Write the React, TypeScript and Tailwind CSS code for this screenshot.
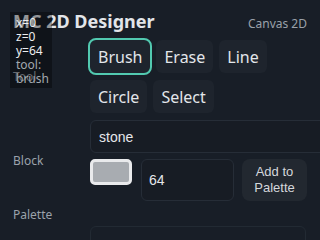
const TOOLS_ROW1 = ["Brush", "Erase", "Line"];
const TOOLS_ROW2 = ["Circle", "Select"];

function ToolButton({ label, active }: { label: string; active?: boolean }) {
  return (
    <button
      className={`h-[33px] rounded-[6px] bg-[#1e242d] px-[8px] text-[16px] text-[#e3e6ea] ${
        active ? "outline-2 outline-[#52c9b0]" : ""
      }`}
    >
      {label}
    </button>
  );
}

export default function App() {
  return (
    <div className="relative h-[240px] w-[320px] overflow-hidden bg-[#181e27] font-['Noto_Sans',sans-serif]">
      <header className="flex items-baseline justify-between pl-[13px] pr-[13px] pt-[9px]">
        <h1 className="text-[18px] font-bold leading-[24px] text-[#e2e5e9]">MC 2D Designer</h1>
        <span className="text-[12px] text-[#9aa1aa]">Canvas 2D</span>
      </header>

      <div className="mt-[7px] flex flex-col gap-[7px]">
        <div className="flex items-center">
          <span className="w-[90px] pl-[13px] text-[12px] text-[#9ba2ab]">Tool</span>
          <div className="flex flex-col gap-[7px]">
            <div className="flex gap-[6px]">
              {TOOLS_ROW1.map((t) => (
                <ToolButton key={t} label={t} active={t === "Brush"} />
              ))}
            </div>
            <div className="flex gap-[6px]">
              {TOOLS_ROW2.map((t) => (
                <ToolButton key={t} label={t} />
              ))}
            </div>
          </div>
        </div>

        <div className="flex items-center">
          <span className="w-[90px] shrink-0 pl-[13px] text-[12px] text-[#9ba2ab]">Block</span>
          <div className="flex flex-col gap-[6px]">
            <input
              readOnly
              value="stone"
              className="h-[33px] w-[250px] rounded-[6px] border border-[#262d37] bg-[#171c24] px-[8px] font-['Liberation_Sans',sans-serif] text-[14px] text-[#e5e7eb]"
            />
            <div className="flex items-start">
              <div className="h-[26px] w-[42px] rounded-[5px] border-[3px] border-[#e9eaec] bg-[#a8acb1]" />
              <input
                readOnly
                value="64"
                className="ml-[9px] h-[42px] w-[93px] rounded-[6px] border border-[#262d37] bg-[#171c24] px-[7px] font-['Liberation_Sans',sans-serif] text-[14px] text-[#e5e7eb]"
              />
              <button className="ml-[8px] h-[42px] w-[65px] rounded-[8px] bg-[#222830] font-['Liberation_Sans',sans-serif] text-[13px] leading-[16px] text-[#d4d7dc]">
                Add to Palette
              </button>
            </div>
          </div>
        </div>

        <div className="flex items-start">
          <span className="-mt-[2px] w-[90px] shrink-0 pl-[13px] text-[12px] text-[#9ba2ab]">Palette</span>
          <div className="mt-[18px] h-[40px] w-[216px] rounded-[6px] border border-[#222a33]" />
        </div>
      </div>

      <div className="absolute left-[10px] top-[12px] h-[76px] w-[42px] bg-black/35 px-[6px] pt-[4px] text-[12px] leading-[14px]">
        <div className="text-[#eceef0]">x=0</div>
        <div className="text-[#eceef0]">z=0</div>
        <div className="text-[#eceef0]">y=64</div>
        <div className="text-[#a3a9b0]">tool: brush</div>
      </div>
    </div>
  );
}
